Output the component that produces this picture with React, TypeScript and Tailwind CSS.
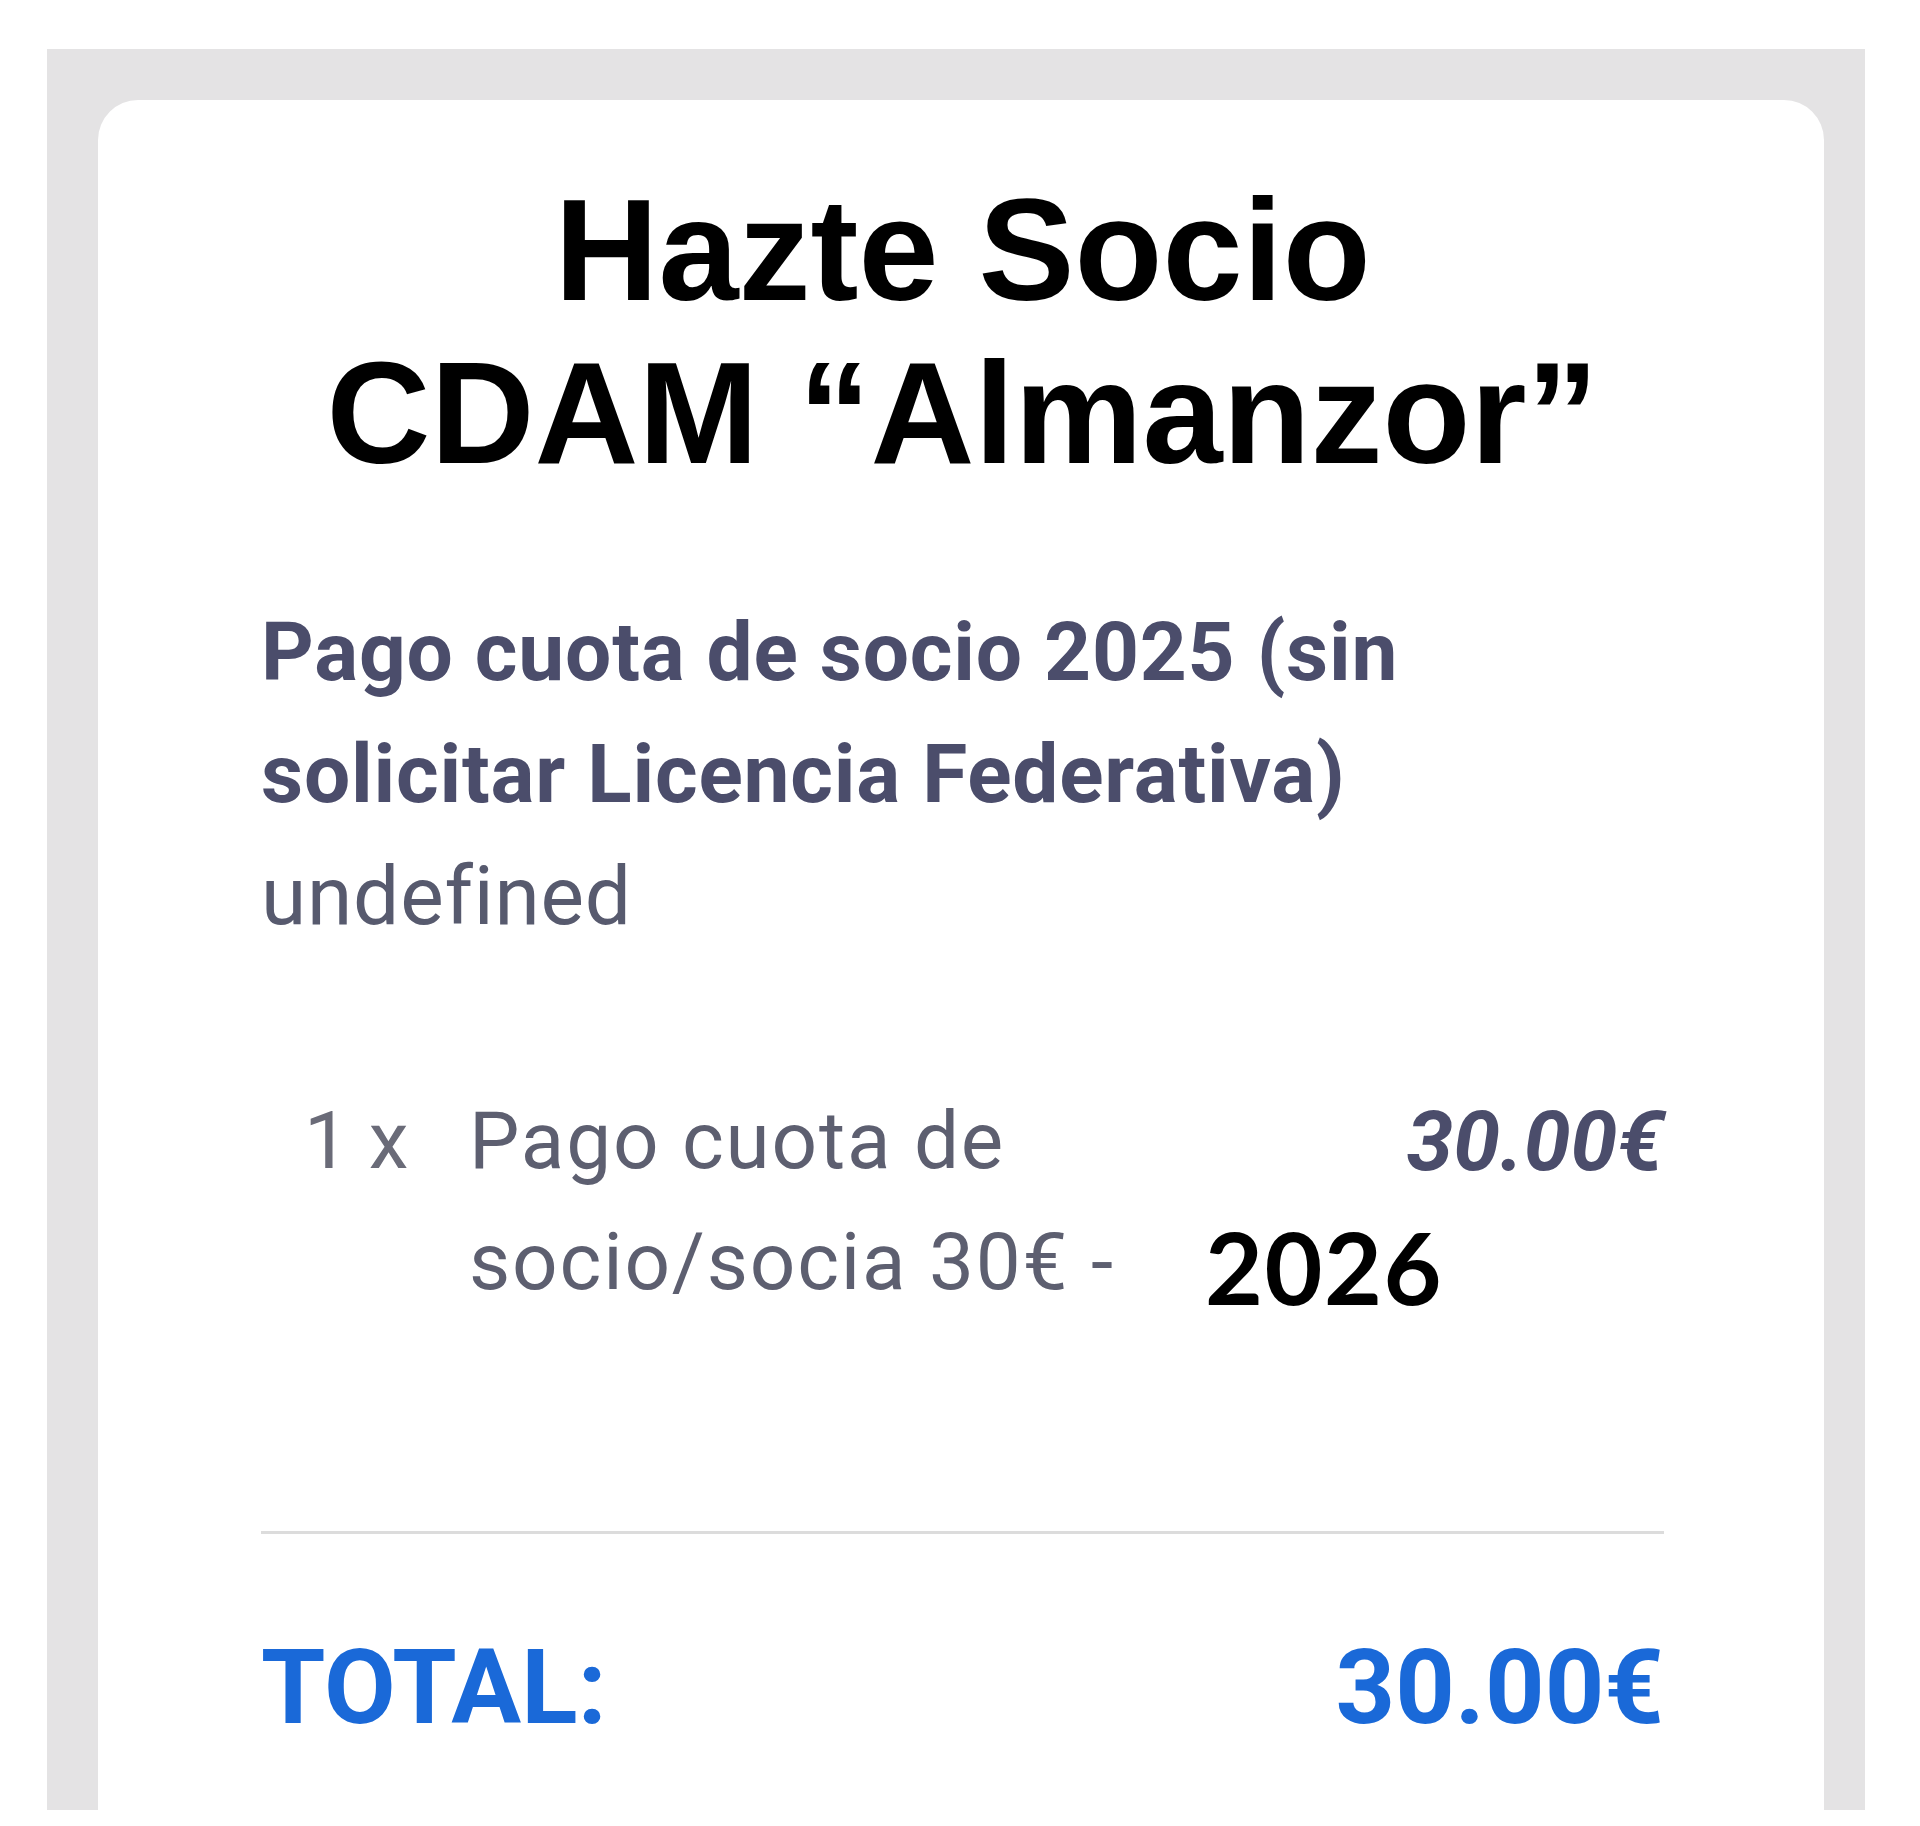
export default function App() {
  return (
    <div className="min-h-[1826px] w-[1920px] bg-white pt-[49px] pl-[47px]">
      <div className="h-[1761px] w-[1818px] overflow-hidden bg-[#e4e3e4] pt-[51px] pl-[51px] pr-[41px]">
        <div className="h-[1800px] rounded-t-[40px] bg-white pt-[69px] pl-[163px] pr-[160px]">
          <h1 className="text-center font-['Liberation_Sans',Arial,sans-serif] text-[144px] font-bold leading-[163px] text-black">
            Hazte Socio
            <br />
            CDAM “Almanzor”
          </h1>

          <div className="mt-[96px] font-['Roboto',sans-serif] text-[82px] leading-[122px] tracking-[0.8px]">
            <div className="font-bold text-[#4b4d6b]">
              Pago cuota de socio 2025 (sin
              <br />
              solicitar Licencia Federativa)
            </div>
            <div className="text-[#575a6e]">undefined</div>
          </div>

          <div className="mt-[124px] flex pl-[43px] font-['Roboto',sans-serif] text-[80px] leading-[121px]">
            <div className="w-[165px] shrink-0 text-[#6a6b78]">1 x</div>
            <div className="relative flex-1 tracking-[1.8px] text-[#5d5f70]">
              Pago cuota de
              <br />
              socio/socia 30€ -
              <span className="absolute left-[660px] top-[135px] bg-white pr-[10px] pl-[76px] font-['Lato',sans-serif] text-[100px] font-bold leading-[100px] tracking-[1.5px] text-black">
                2026
              </span>
            </div>
            <div className="shrink-0 text-[84px] font-bold italic text-[#4b4d6b]">30.00€</div>
          </div>

          <div className="mt-[208px] h-[3px] bg-[#dcdcdc]" />

          <div className="mt-[95px] flex justify-between font-['Roboto',sans-serif] text-[104px] font-bold leading-[117px] text-[#1a69d8]">
            <span>TOTAL:</span>
            <span>30.00€</span>
          </div>
        </div>
      </div>
    </div>
  )
}
